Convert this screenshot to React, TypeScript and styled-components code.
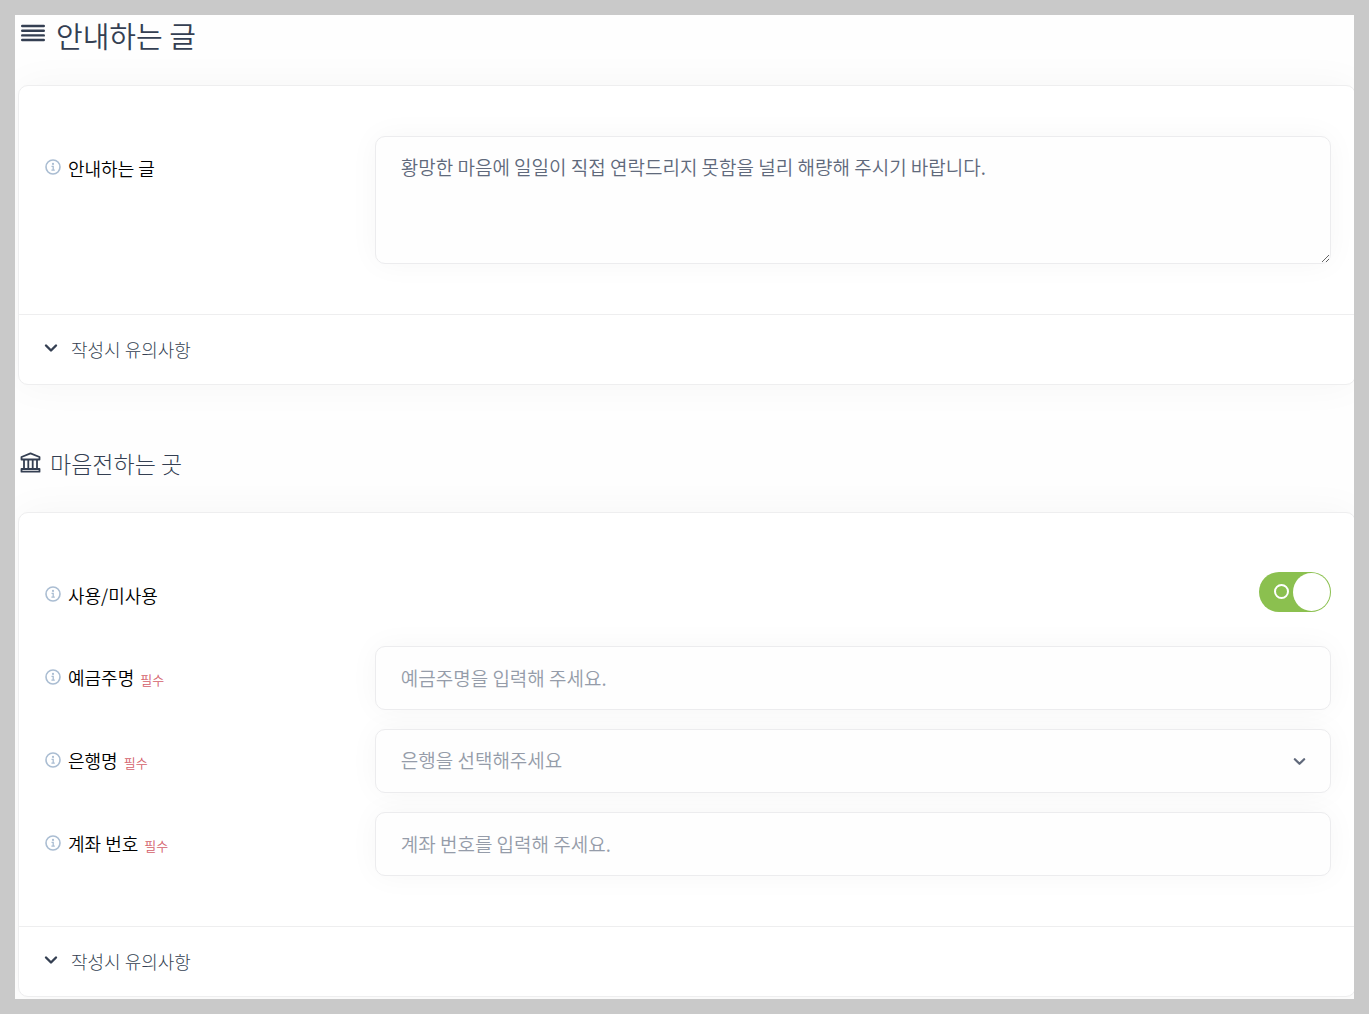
import React, { useState } from 'react';
import styled, { createGlobalStyle } from 'styled-components';

const GlobalStyle = createGlobalStyle`
  *, *::before, *::after { box-sizing: border-box; }
  body {
    margin: 0;
    padding: 15px;
    background: #c9c9c9;
    color: #000;
    font-family: "Noto Sans CJK KR", sans-serif;
    font-weight: 350;
  }
  button, input, select, textarea { font: inherit; }
`;

const Page = styled.main`
  padding: 0 0 2px 3px;
  background: #fefefe;
  overflow: hidden;
`;

const Heading = styled.h2<{ $large?: boolean }>`
  display: flex;
  align-items: center;
  gap: ${(p) => (p.$large ? 11 : 9)}px;
  height: ${(p) => (p.$large ? 40 : 34)}px;
  margin: 0 0 ${(p) => (p.$large ? 30 : 32)}px;
  padding-left: 2px;
  color: #343f52;
  font-size: ${(p) => (p.$large ? 29 : 23)}px;
  font-weight: ${(p) => (p.$large ? 350 : 300)};
  line-height: ${(p) => (p.$large ? 40 : 34)}px;

  svg { flex: none; margin-bottom: ${(p) => (p.$large ? 4 : 2)}px; }
`;

const Card = styled.section`
  margin-right: -2px;
  border: 1px solid #eeeeef;
  border-radius: 10px;
  background: #fff;
  box-shadow: 0 0 40px rgba(30, 34, 40, 0.04);

  & + h2 { margin-top: 61px; }
`;

const Rows = styled.div`
  display: flex;
  flex-direction: column;
  gap: 19px;
  padding: 50px 24px 50px 26px;
`;

const Row = styled.div`
  display: grid;
  grid-template-columns: 1fr 3fr;
  column-gap: 11px;
  min-height: 64px;
`;

const Label = styled.label`
  display: flex;
  align-items: center;
  align-self: start;
  height: 46px;
  gap: 7px;
  padding-top: 18px;
  font-size: 18px;
  line-height: 28px;

  svg { flex: none; margin-bottom: 3px; }
`;

const Required = styled.span`
  margin-left: 6px;
  color: #d4606a;
  font-size: 13px;
`;

const fieldStyle = `
  display: block;
  width: 100%;
  margin: 0;
  padding: 15px 25px 17px;
  border: 1px solid #ececee;
  border-radius: 10px;
  outline: none;
  background: #fefefe;
  box-shadow: 0 0 30px rgba(30, 34, 40, 0.04);
  color: #60697b;
  font-size: 19px;
  line-height: 30px;
`;

const TextInput = styled.input`
  ${fieldStyle}
  height: 64px;
  &::placeholder { color: #959ca9; opacity: 1; }
`;

const TextArea = styled.textarea`
  ${fieldStyle}
  height: 128px;
  resize: vertical;
`;

const SelectWrap = styled.div`
  position: relative;

  svg {
    position: absolute;
    top: 26px;
    right: 25px;
    pointer-events: none;
  }
`;

const Select = styled.select`
  ${fieldStyle}
  height: 64px;
  appearance: none;
  color: #959ca9;
`;

const SwitchCell = styled.div`
  display: flex;
  justify-content: flex-end;
  align-items: flex-start;
  padding-top: 9px;
`;

const Switch = styled.input`
  appearance: none;
  display: flex;
  align-items: center;
  justify-content: space-between;
  width: 72px;
  height: 40px;
  margin: 0;
  padding: 0 1px 0 15px;
  border-radius: 20px;
  background: #c5c9d0;
  cursor: pointer;

  &::before {
    content: "";
    width: 15px;
    height: 15px;
    margin-bottom: 1px;
    border: 2px solid #fff;
    border-radius: 50%;
  }
  &::after {
    content: "";
    width: 37px;
    height: 38px;
    border-radius: 50%;
    background: #fff;
  }
  &:checked { background: #8bc04f; }
  &:not(:checked) {
    flex-direction: row-reverse;
    padding: 0 15px 0 1px;
  }
`;

const Notes = styled.button`
  display: flex;
  align-items: center;
  gap: 13px;
  width: 100%;
  height: 70px;
  padding: 0 25px 1px;
  border: 0;
  border-top: 1px solid #eeeeef;
  background: none;
  color: #343f52;
  font-size: 18px;
  font-weight: 300;
  line-height: 28px;
  text-align: left;
  cursor: pointer;

  svg { margin-bottom: 2px; }
`;

const JustifyIcon = () => (
  <svg width="25" height="18" viewBox="0 0 25 18" stroke="#343f52" strokeWidth="2.4" strokeLinecap="round" aria-hidden="true">
    <path d="M2.200 2h21.600M2.200 6.700h21.600M2.200 11.400h21.600M2.200 16h21.600" />
  </svg>
);

const BankIcon = () => (
  <svg width="21" height="21" viewBox="0 0 21 21" fill="none" stroke="#343f52" strokeWidth="1.8" strokeLinejoin="round" aria-hidden="true">
    <path d="M1.500 7.500V5L10.500 1.300 19.500 5v2.500zM4 7.500V17M8.300 7.500V17M12.700 7.500V17M17 7.500V17M1.500 19.700V17h18v2.700z" />
  </svg>
);

const InfoIcon = () => (
  <svg width="16" height="16" viewBox="0 0 16 16" fill="none" stroke="#aabdd2" aria-hidden="true">
    <circle cx="8" cy="8" r="7" strokeWidth="1.6" />
    <path d="M6.500 7.400H8.200V11M6.400 11.200h3.400" strokeWidth="1.300" />
    <circle cx="8" cy="4.900" r="1.100" fill="#aabdd2" stroke="none" />
  </svg>
);

const Chevron = ({ size = 14, color = '#343f52' }: { size?: number; color?: string }) => (
  <svg width={size} height={size} viewBox="0 0 14 14" fill="none" stroke={color} strokeWidth="2.400" strokeLinecap="round" strokeLinejoin="round" aria-hidden="true">
    <path d="M2 4.500l5 5 5-5" />
  </svg>
);

type FieldLabelProps = { id: string; text: string; required?: boolean };

const FieldLabel = ({ id, text, required }: FieldLabelProps) => (
  <Label htmlFor={id}>
    <InfoIcon />
    <span>
      {text}
      {required && <Required>필수</Required>}
    </span>
  </Label>
);

const NotesToggle = () => {
  const [open, setOpen] = useState(false);
  return (
    <Notes type="button" aria-expanded={open} onClick={() => setOpen(!open)}>
      <Chevron />
      <span>작성시 유의사항</span>
    </Notes>
  );
};

export default function App() {
  return (
    <>
      <GlobalStyle />
      <Page>
        <Heading $large>
          <JustifyIcon />
          안내하는 글
        </Heading>
        <Card>
          <Rows>
            <Row>
              <FieldLabel id="notice" text="안내하는 글" />
              <TextArea id="notice" defaultValue="황망한 마음에 일일이 직접 연락드리지 못함을 널리 해량해 주시기 바랍니다." />
            </Row>
          </Rows>
          <NotesToggle />
        </Card>

        <Heading>
          <BankIcon />
          마음전하는 곳
        </Heading>
        <Card>
          <Rows>
            <Row>
              <FieldLabel id="enabled" text="사용/미사용" />
              <SwitchCell>
                <Switch id="enabled" type="checkbox" role="switch" defaultChecked />
              </SwitchCell>
            </Row>
            <Row>
              <FieldLabel id="holder" text="예금주명" required />
              <TextInput id="holder" type="text" placeholder="예금주명을 입력해 주세요." />
            </Row>
            <Row>
              <FieldLabel id="bank" text="은행명" required />
              <SelectWrap>
                <Select id="bank" defaultValue="">
                  <option value="">은행을 선택해주세요</option>
                </Select>
                <Chevron size={13} color="#60697b" />
              </SelectWrap>
            </Row>
            <Row>
              <FieldLabel id="account" text="계좌 번호" required />
              <TextInput id="account" type="text" placeholder="계좌 번호를 입력해 주세요." />
            </Row>
          </Rows>
          <NotesToggle />
        </Card>
      </Page>
    </>
  );
}
